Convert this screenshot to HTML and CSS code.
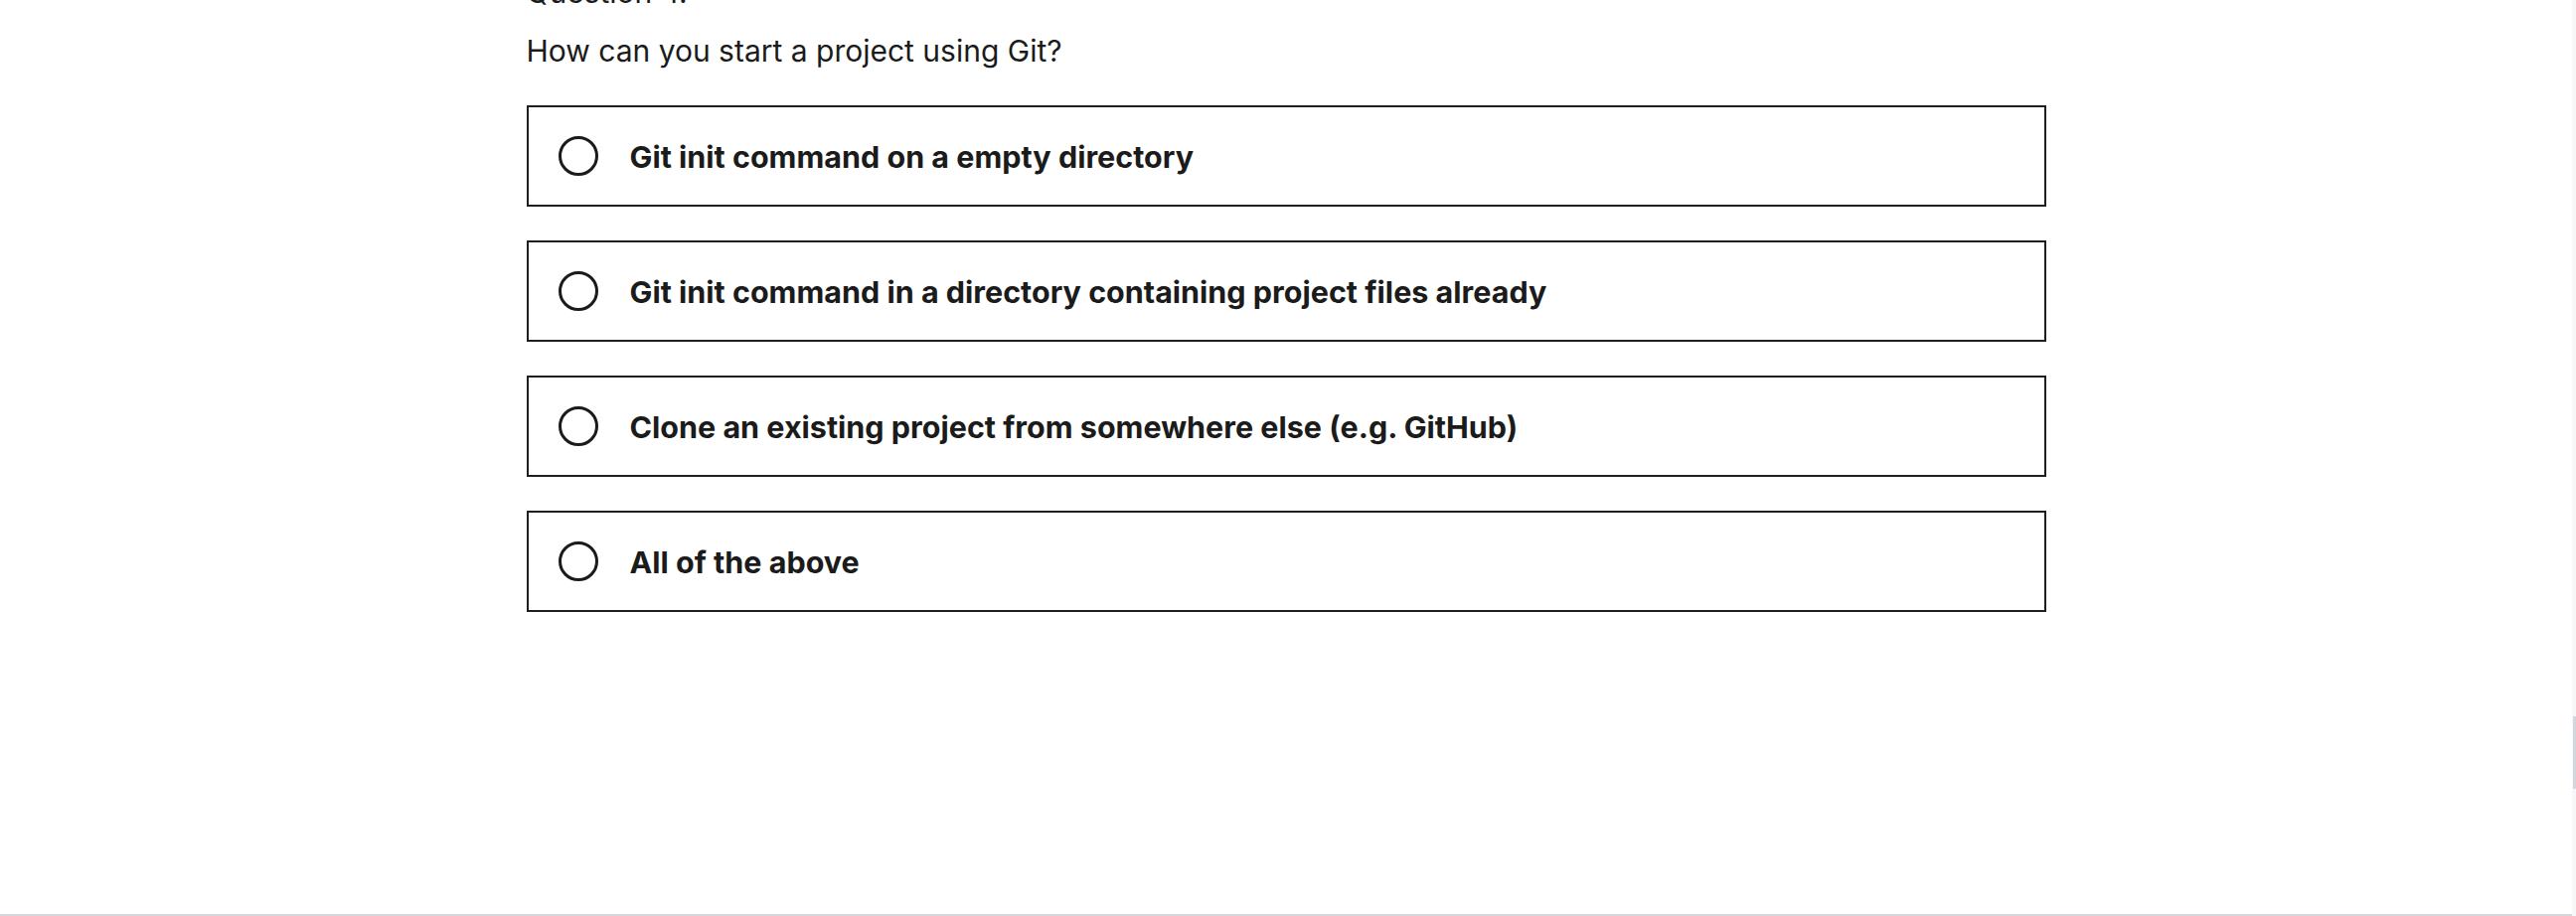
FILE: index.html
```html
<!DOCTYPE html>
<html lang="en">
<head>
<meta charset="utf-8">
<title>Quiz</title>
<link rel="stylesheet" href="styles.css">
</head>
<body>
<div class="main">
  <div class="quiz">
    <div class="q-label">Question 4.</div>
    <div class="q-text">How can you start a project using Git?</div>
    <div class="options">
      <label class="option"><span class="radio"></span><span class="opt-text">Git init command on a empty directory</span></label>
      <label class="option"><span class="radio"></span><span class="opt-text">Git init command in a directory containing project files already</span></label>
      <label class="option"><span class="radio"></span><span class="opt-text">Clone an existing project from somewhere else (e.g. GitHub)</span></label>
      <label class="option"><span class="radio"></span><span class="opt-text">All of the above</span></label>
    </div>
  </div>
</div>
<div class="scrollbar"><div class="thumb"></div></div>
</body>
</html>
```
FILE: styles.css
```css
html, body {
  margin: 0;
  padding: 0;
  background: #ffffff;
}
body {
  display: flex;
  height: 922px;
  overflow: hidden;
  font-family: Inter, "Liberation Sans", sans-serif;
  color: #1b1b1b;
}
.main {
  flex: 1;
  height: 920px;
  border-bottom: 2px solid #d4d7db;
  overflow: hidden;
}
.quiz {
  width: 1529px;
  margin: 0 auto;
}
.q-label {
  font-size: 30px;
  line-height: 40px;
  margin-top: -28px;
}
.q-text {
  font-size: 30px;
  line-height: 40px;
  margin-top: 19px;
}
.options {
  display: flex;
  flex-direction: column;
  gap: 34px;
  margin-top: 35px;
}
.option {
  display: flex;
  align-items: center;
  gap: 32px;
  height: 98px;
  border: 2px solid #1f1f1f;
  padding: 0 29px 0 30px;
  cursor: pointer;
}
.radio {
  width: 34px;
  height: 34px;
  border: 3px solid #1b1b1b;
  border-radius: 50%;
  flex: none;
}
.opt-text {
  font-size: 30.5px;
  font-weight: 700;
  letter-spacing: 0;
}
.scrollbar {
  width: 4px;
  height: 922px;
  background: #f6f7f9;
  flex: none;
}
.thumb {
  margin-top: 721px;
  margin-left: 1px;
  width: 3px;
  height: 73px;
  background: #d3d6da;
}
```
